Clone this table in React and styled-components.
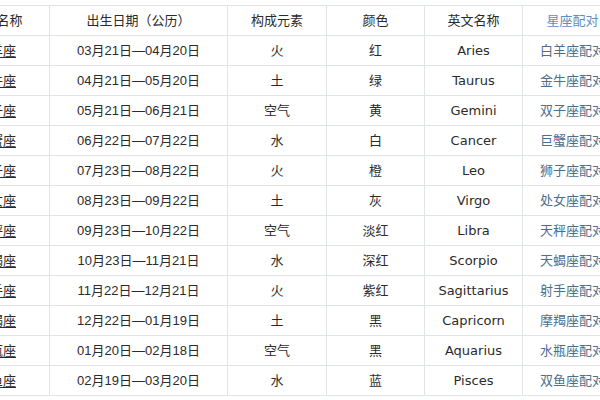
import React from 'react';
import styled, { createGlobalStyle } from 'styled-components';

const GlobalStyle = createGlobalStyle`
  html, body {
    margin: 0;
    padding: 0;
    background: #ffffff;
  }
  body {
    font-family: "DejaVu Sans", "Noto Sans CJK SC", sans-serif;
    overflow: hidden;
  }
`;

const Page = styled.div`
  width: 600px;
  height: 400px;
  overflow: hidden;
  padding-top: 5px;
  box-sizing: border-box;
`;

const Table = styled.table`
  margin-left: -57px;
  border-collapse: collapse;
  table-layout: fixed;
  width: ${(p) => p.$width}px;
  font-size: 13px;
  color: #2b2b2b;
`;

const Row = styled.tr`
  height: 30px;
`;

const Cell = styled.td`
  border: 1px solid #dfe4e7;
  text-align: center;
  vertical-align: middle;
  padding: 0;
  white-space: nowrap;
  overflow: hidden;
  line-height: 16px;
  font-family: ${(p) =>
    p.$kind === 'date'
      ? '"Liberation Sans", "Noto Sans CJK SC", sans-serif'
      : '"DejaVu Sans", "Noto Sans CJK SC", sans-serif'};
  color: ${(p) => (p.$kind === 'link' ? '#4d6f8e' : p.$kind === 'head-link' ? '#5f8fbd' : '#2b2b2b')};
  text-decoration: ${(p) => (p.$kind === 'name' ? 'underline' : 'none')};
  text-underline-offset: 2px;
`;

const HeadCell = styled(Cell).attrs({ as: 'th' })`
  font-weight: normal;
`;

const widths = [106, 178, 99, 98, 98, 100];

const signs = [
  ['白羊座', '03月21日—04月20日', '火', '红', 'Aries'],
  ['金牛座', '04月21日—05月20日', '土', '绿', 'Taurus'],
  ['双子座', '05月21日—06月21日', '空气', '黄', 'Gemini'],
  ['巨蟹座', '06月22日—07月22日', '水', '白', 'Cancer'],
  ['狮子座', '07月23日—08月22日', '火', '橙', 'Leo'],
  ['处女座', '08月23日—09月22日', '土', '灰', 'Virgo'],
  ['天秤座', '09月23日—10月22日', '空气', '淡红', 'Libra'],
  ['天蝎座', '10月23日—11月21日', '水', '深红', 'Scorpio'],
  ['射手座', '11月22日—12月21日', '火', '紫红', 'Sagittarius'],
  ['摩羯座', '12月22日—01月19日', '土', '黑', 'Capricorn'],
  ['水瓶座', '01月20日—02月18日', '空气', '黑', 'Aquarius'],
  ['双鱼座', '02月19日—03月20日', '水', '蓝', 'Pisces'],
];

export default function App() {
  const total = widths.reduce((a, b) => a + b, 0);
  return (
    <Page>
      <GlobalStyle />
      <Table $width={total}>
        <colgroup>
          {widths.map((w, i) => (
            <col key={i} style={{ width: w }} />
          ))}
        </colgroup>
        <thead>
          <Row>
            <HeadCell>星座名称</HeadCell>
            <HeadCell>出生日期（公历）</HeadCell>
            <HeadCell>构成元素</HeadCell>
            <HeadCell>颜色</HeadCell>
            <HeadCell>英文名称</HeadCell>
            <HeadCell $kind="head-link">星座配对</HeadCell>
          </Row>
        </thead>
        <tbody>
          {signs.map(([name, date, element, colour, english]) => (
            <Row key={name}>
              <Cell $kind="name">{name}</Cell>
              <Cell $kind="date">{date}</Cell>
              <Cell>{element}</Cell>
              <Cell>{colour}</Cell>
              <Cell>{english}</Cell>
              <Cell $kind="link">{name}配对</Cell>
            </Row>
          ))}
        </tbody>
      </Table>
    </Page>
  );
}
